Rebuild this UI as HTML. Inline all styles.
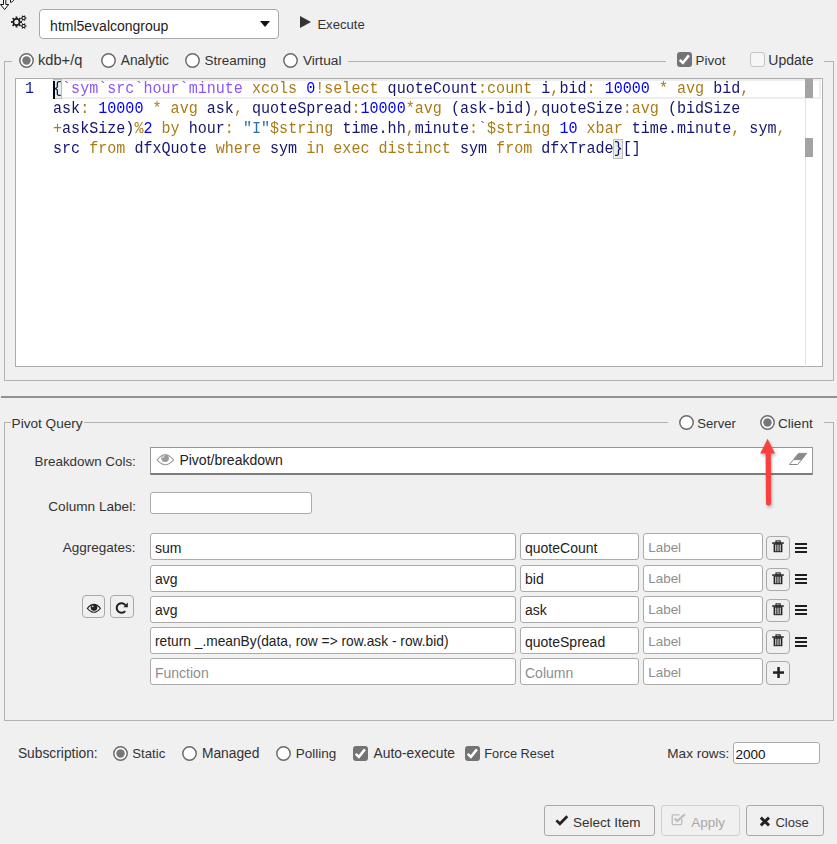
<!DOCTYPE html>
<html><head><meta charset="utf-8">
<style>
*{box-sizing:border-box;margin:0;padding:0}
html,body{width:837px;height:844px;overflow:hidden;background:#f0f0f0}
body{position:relative;font-family:"Liberation Sans",sans-serif;color:#333}
.a{position:absolute}
.t{position:absolute;white-space:nowrap;line-height:20px;font-size:13.5px;color:#333}
.fs{position:absolute;border:1px solid #b2b2b2}
.gap{position:absolute;background:#f0f0f0;height:3px}
.radio{position:absolute;width:15px;height:15px;border:1.7px solid #6c6c6c;border-radius:50%;background:#fff}
.radio.on::after{content:"";position:absolute;left:1.55px;top:1.55px;width:8.2px;height:8.2px;border-radius:50%;background:#777}
.cb{position:absolute;width:15px;height:15px;border-radius:3px}
.cb.on{background:#747474}
.cb.off{border:1px solid #c4c4c4;background:#f6f6f6}
.inp{position:absolute;background:#fff;border:1px solid #ababab;border-radius:3px}
.btn{position:absolute;border:1px solid #a9a9a9;border-radius:3px;background:#f0f0f0}
.code{position:absolute;left:53px;font-family:"Liberation Mono",monospace;font-size:16px;line-height:20px;white-space:pre;color:#16166e;transform-origin:0 0;transform:scaleX(0.9417)}
.k{color:#ab7b16}.n{color:#0000ff}.s{color:#8f55f5}.q{color:#2a6fa6}
.ph{color:#8e8e8e}
</style></head><body>

<!-- cursor icon -->
<svg class="a" style="left:0;top:0" width="16" height="12" viewBox="0 0 16 12">
<path d="M3.5 -1 V4.5 H0.5 L4.6 9.6 L8.7 4.5 H5.8 V-1 Z" fill="#fff" stroke="#111" stroke-width="1"/>
<path d="M10.5 -1 L10.5 2.3 Q11.5 2.8 13.5 0.5 L14 -1" fill="#fff" stroke="#111" stroke-width="1"/>
</svg>

<!-- gear icon -->
<svg class="a" style="left:10px;top:15px" width="18" height="15" viewBox="0 0 18 15">
<path fill="#1e1e1e" fill-rule="evenodd" d="M10.20 5.47 L10.41 6.17 L12.02 6.06 L12.02 7.94 L10.41 7.83 L10.20 8.53 L9.86 9.18 L11.07 10.24 L9.74 11.57 L8.68 10.36 L8.03 10.70 L7.33 10.91 L7.44 12.52 L5.56 12.52 L5.67 10.91 L4.97 10.70 L4.32 10.36 L3.26 11.57 L1.93 10.24 L3.14 9.18 L2.80 8.53 L2.59 7.83 L0.98 7.94 L0.98 6.06 L2.59 6.17 L2.80 5.47 L3.14 4.82 L1.93 3.76 L3.26 2.43 L4.32 3.64 L4.97 3.30 L5.67 3.09 L5.56 1.48 L7.44 1.48 L7.33 3.09 L8.03 3.30 L8.68 3.64 L9.74 2.43 L11.07 3.76 L9.86 4.82Z M8.7 7A2.2 2.2 0 1 0 4.3 7A2.2 2.2 0 1 0 8.7 7Z"/>
<path fill="#1e1e1e" fill-rule="evenodd" d="M15.42 2.05 L15.62 2.53 L16.43 2.47 L16.43 3.73 L15.62 3.67 L15.42 4.15 L15.10 4.57 L15.56 5.23 L14.47 5.87 L14.12 5.14 L13.60 5.20 L13.08 5.14 L12.73 5.87 L11.64 5.23 L12.10 4.57 L11.78 4.15 L11.58 3.67 L10.77 3.73 L10.77 2.47 L11.58 2.53 L11.78 2.05 L12.10 1.63 L11.64 0.97 L12.73 0.33 L13.08 1.06 L13.60 1.00 L14.12 1.06 L14.47 0.33 L15.56 0.97 L15.10 1.63Z M14.7 3.1A1.1 1.1 0 1 0 12.5 3.1A1.1 1.1 0 1 0 14.7 3.1Z"/>
<path fill="#1e1e1e" fill-rule="evenodd" d="M15.42 9.95 L15.62 10.43 L16.43 10.37 L16.43 11.63 L15.62 11.57 L15.42 12.05 L15.10 12.47 L15.56 13.13 L14.47 13.77 L14.12 13.04 L13.60 13.10 L13.08 13.04 L12.73 13.77 L11.64 13.13 L12.10 12.47 L11.78 12.05 L11.58 11.57 L10.77 11.63 L10.77 10.37 L11.58 10.43 L11.78 9.95 L12.10 9.53 L11.64 8.87 L12.73 8.23 L13.08 8.96 L13.60 8.90 L14.12 8.96 L14.47 8.23 L15.56 8.87 L15.10 9.53Z M14.7 11A1.1 1.1 0 1 0 12.5 11A1.1 1.1 0 1 0 14.7 11Z"/>
</svg>

<!-- dropdown -->
<div class="inp" style="left:39px;top:9px;width:240px;height:30px;border-radius:4px;border-color:#a9a9a9"></div>
<div class="t" style="left:50.1px;top:16.0px;font-size:14.0px;color:#222">html5evalcongroup</div>
<svg class="a" style="left:260px;top:21px" width="10" height="6"><path d="M0 0H10L5 6Z" fill="#111"/></svg>

<!-- execute -->
<svg class="a" style="left:300px;top:16px" width="12" height="12"><path d="M0 0L11 6L0 12Z" fill="#333"/></svg>
<div class="t" style="left:317.4px;top:15.0px;font-size:13.1px">Execute</div>

<!-- fieldset 1 -->
<div class="fs" style="left:4px;top:61px;width:830px;height:320px"></div>
<div class="gap" style="left:12px;top:60px;width:336px"></div>
<div class="gap" style="left:666px;top:60px;width:158px"></div>
<svg class="a" style="left:19px;top:53px" width="15" height="15" viewBox="0 0 15 15"><circle cx="7.5" cy="7.5" r="6.7" fill="#fff" stroke="#6a6a6a" stroke-width="1.45"/><circle cx="7.5" cy="7.5" r="4.2" fill="#777"/></svg><div class="t" style="left:37.9px;top:50.0px;font-size:14.7px">kdb+/q</div>
<svg class="a" style="left:100.5px;top:53px" width="15" height="15" viewBox="0 0 15 15"><circle cx="7.5" cy="7.5" r="6.7" fill="#fff" stroke="#6a6a6a" stroke-width="1.45"/></svg><div class="t" style="left:120.7px;top:51.0px;font-size:13.8px">Analytic</div>
<svg class="a" style="left:185px;top:53px" width="15" height="15" viewBox="0 0 15 15"><circle cx="7.5" cy="7.5" r="6.7" fill="#fff" stroke="#6a6a6a" stroke-width="1.45"/></svg><div class="t" style="left:204.4px;top:51.0px;font-size:13.5px">Streaming</div>
<svg class="a" style="left:282.5px;top:53px" width="15" height="15" viewBox="0 0 15 15"><circle cx="7.5" cy="7.5" r="6.7" fill="#fff" stroke="#6a6a6a" stroke-width="1.45"/></svg><div class="t" style="left:302.9px;top:51.0px;font-size:13.7px">Virtual</div>
<div class="cb on" style="left:677px;top:52px"><svg width="15" height="15"><path d="M2.7 7.8L5.9 10.9L11.9 3.4" fill="none" stroke="#fff" stroke-width="2.5"/></svg></div>
<div class="t" style="left:695.6px;top:51.0px;font-size:13.4px">Pivot</div>
<div class="cb off" style="left:750px;top:52px"></div>
<div class="t" style="left:768.3px;top:50.0px;font-size:14.0px">Update</div>

<!-- editor -->
<div class="a" style="left:15px;top:78px;width:808px;height:289px;background:#fff;border:1px solid #adadad"></div>
<div class="a" style="left:53px;top:79px;width:768px;height:20px;border:2px solid #eeeeee"></div>
<div class="a" style="left:805px;top:98px;width:1px;height:267px;background:#e2e2e2"></div>
<div class="a" style="left:805px;top:79px;width:8px;height:19px;background:#a3a3a3"></div>
<div class="a" style="left:805px;top:138px;width:8px;height:19px;background:#a3a3a3"></div>
<div class="a" style="left:53px;top:79px;width:9px;height:20px;background:#e6efe6;border:1px solid #bdbdbd"></div>
<div class="a" style="left:613px;top:139px;width:10px;height:20px;background:#e6efe6;border:1px solid #bdbdbd"></div>
<div class="a" style="left:53px;top:81px;width:2px;height:18px;background:#000"></div>
<div class="code" style="left:25px;top:79px;color:#0c1c8c">1</div>
<div class="code" style="top:79px">{<span class="s">`sym`src`hour`minute</span> <span class="k">xcols</span> <span class="n">0</span><span class="k">!select</span> quoteCount<span class="k">:count</span> i<span class="k">,</span>bid<span class="k">:</span> <span class="n">10000</span> <span class="k">*</span> <span class="k">avg</span> bid<span class="k">,</span></div>
<div class="code" style="top:99px">ask<span class="k">:</span> <span class="n">10000</span> <span class="k">*</span> <span class="k">avg</span> ask<span class="k">,</span> quoteSpread<span class="k">:</span><span class="n">10000</span><span class="k">*avg</span> (ask-bid)<span class="k">,</span>quoteSize<span class="k">:avg</span> (bidSize</div>
<div class="code" style="top:119px"><span class="k">+</span>askSize)<span class="k">%</span><span class="n">2</span> <span class="k">by</span> hour<span class="k">:</span> <span class="q">"I"</span><span class="k">$string</span> time.hh<span class="k">,</span>minute<span class="k">:</span><span class="s">`</span><span class="k">$string</span> <span class="n">10</span> <span class="k">xbar</span> time.minute<span class="k">,</span> sym<span class="k">,</span></div>
<div class="code" style="top:139px">src <span class="k">from</span> dfxQuote <span class="k">where</span> sym <span class="k">in</span> <span class="k">exec</span> <span class="k">distinct</span> sym <span class="k">from</span> dfxTrade}[]</div>

<!-- separator -->
<div class="a" style="left:1px;top:396px;width:836px;height:2px;background:#929292"></div>

<!-- fieldset 2 -->
<div class="fs" style="left:4px;top:422px;width:830px;height:299px"></div>
<div class="gap" style="left:11px;top:421px;width:73px"></div>
<div class="gap" style="left:668px;top:421px;width:156px"></div>
<div class="t" style="left:11.6px;top:414.0px;font-size:13.6px">Pivot Query</div>
<svg class="a" style="left:679px;top:415px" width="15" height="15" viewBox="0 0 15 15"><circle cx="7.5" cy="7.5" r="6.7" fill="#fff" stroke="#6a6a6a" stroke-width="1.45"/></svg><div class="t" style="left:697.3px;top:414.0px;font-size:13.1px">Server</div>
<svg class="a" style="left:760px;top:415px" width="15" height="15" viewBox="0 0 15 15"><circle cx="7.5" cy="7.5" r="6.7" fill="#fff" stroke="#6a6a6a" stroke-width="1.45"/><circle cx="7.5" cy="7.5" r="4.2" fill="#777"/></svg><div class="t" style="left:778.0px;top:414.0px;font-size:13.6px">Client</div>

<div class="t" style="left:34.6px;top:452.0px;font-size:13.4px">Breakdown Cols:</div>
<div class="a" style="left:150px;top:447px;width:663px;height:28px;background:#fff;border:1px solid #979797;border-bottom:2px solid #7c7c7c;border-radius:1px"></div>
<svg class="a" style="left:156px;top:453px" width="19" height="13" viewBox="0 0 19 13">
<path d="M1.1 6.9Q9.1 -3.3 17.6 6.9Q9.1 16.6 1.1 6.9Z" fill="none" stroke="#9a9a9a" stroke-width="1.05"/>
<circle cx="9.1" cy="5.3" r="3.8" fill="#9a9a9a"/><path d="M6.6 5.2Q6.8 3 8.8 2.5" fill="none" stroke="#e8e8e8" stroke-width="1.1"/>
</svg>
<div class="t" style="left:179.4px;top:450.0px;font-size:14.0px;color:#222">Pivot/breakdown</div>
<svg class="a" style="left:788px;top:452px" width="20" height="14" viewBox="0 0 20 14">
<path d="M10.6 1.3H18.8L13.9 7.5H5.4Z" fill="#8a8a8a" stroke="#8a8a8a" stroke-width="0.8" stroke-linejoin="round"/>
<path d="M5.5 7.6H13.8L9.7 12.5H1.4Z" fill="#fff" stroke="#8a8a8a" stroke-width="1" stroke-linejoin="round"/>
</svg>

<div class="t" style="left:48.3px;top:497.0px;font-size:13.6px">Column Label:</div>
<div class="inp" style="left:150px;top:492px;width:162px;height:22px"></div>

<div class="t" style="left:62.7px;top:538.0px;font-size:13.5px">Aggregates:</div>

<!--ROWS-->
<div class="inp" style="left:150px;top:533.3px;width:366px;height:27px"></div>
<div class="inp" style="left:520px;top:533.3px;width:118.5px;height:27px"></div>
<div class="inp" style="left:643px;top:533.3px;width:120px;height:27px"></div>
<div class="t" style="left:155px;top:537.95px;font-size:14px;color:#222">sum</div>
<div class="t" style="left:525px;top:537.95px;font-size:14px;color:#222">quoteCount</div>
<div class="t ph" style="left:648.3px;top:537.95px;font-size:13.4px">Label</div>
<div class="btn" style="left:766px;top:536.3px;width:24px;height:23.5px;border-radius:4px"><svg class="a" style="left:5.2px;top:3.2px" width="12" height="13" viewBox="0 0 12 13"><rect x="4" y="0.9" width="4.2" height="2" fill="none" stroke="#222" stroke-width="1.1"/><rect x="0.2" y="2.3" width="11.6" height="1.5" fill="#222"/><path d="M1.6 3.7H10.4V12.2H1.6Z" fill="#222"/><rect x="3" y="4.6" width="1.4" height="6.6" fill="#b8b8b8"/><rect x="5.3" y="4.6" width="1.4" height="6.6" fill="#b8b8b8"/><rect x="7.6" y="4.6" width="1.4" height="6.6" fill="#b8b8b8"/></svg></div>
<div class="a" style="left:795px;top:542.9px;width:12px;height:2px;background:#1e1e1e"></div>
<div class="a" style="left:795px;top:546.9px;width:12px;height:2px;background:#1e1e1e"></div>
<div class="a" style="left:795px;top:550.9px;width:12px;height:2px;background:#1e1e1e"></div>
<div class="inp" style="left:150px;top:564.5px;width:366px;height:27px"></div>
<div class="inp" style="left:520px;top:564.5px;width:118.5px;height:27px"></div>
<div class="inp" style="left:643px;top:564.5px;width:120px;height:27px"></div>
<div class="t" style="left:155px;top:569.15px;font-size:14px;color:#222">avg</div>
<div class="t" style="left:525px;top:569.15px;font-size:14px;color:#222">bid</div>
<div class="t ph" style="left:648.3px;top:569.15px;font-size:13.4px">Label</div>
<div class="btn" style="left:766px;top:567.5px;width:24px;height:23.5px;border-radius:4px"><svg class="a" style="left:5.2px;top:3.2px" width="12" height="13" viewBox="0 0 12 13"><rect x="4" y="0.9" width="4.2" height="2" fill="none" stroke="#222" stroke-width="1.1"/><rect x="0.2" y="2.3" width="11.6" height="1.5" fill="#222"/><path d="M1.6 3.7H10.4V12.2H1.6Z" fill="#222"/><rect x="3" y="4.6" width="1.4" height="6.6" fill="#b8b8b8"/><rect x="5.3" y="4.6" width="1.4" height="6.6" fill="#b8b8b8"/><rect x="7.6" y="4.6" width="1.4" height="6.6" fill="#b8b8b8"/></svg></div>
<div class="a" style="left:795px;top:574.1px;width:12px;height:2px;background:#1e1e1e"></div>
<div class="a" style="left:795px;top:578.1px;width:12px;height:2px;background:#1e1e1e"></div>
<div class="a" style="left:795px;top:582.1px;width:12px;height:2px;background:#1e1e1e"></div>
<div class="inp" style="left:150px;top:595.8px;width:366px;height:27px"></div>
<div class="inp" style="left:520px;top:595.8px;width:118.5px;height:27px"></div>
<div class="inp" style="left:643px;top:595.8px;width:120px;height:27px"></div>
<div class="t" style="left:155px;top:600.45px;font-size:14px;color:#222">avg</div>
<div class="t" style="left:525px;top:600.45px;font-size:14px;color:#222">ask</div>
<div class="t ph" style="left:648.3px;top:600.45px;font-size:13.4px">Label</div>
<div class="btn" style="left:766px;top:598.8px;width:24px;height:23.5px;border-radius:4px"><svg class="a" style="left:5.2px;top:3.2px" width="12" height="13" viewBox="0 0 12 13"><rect x="4" y="0.9" width="4.2" height="2" fill="none" stroke="#222" stroke-width="1.1"/><rect x="0.2" y="2.3" width="11.6" height="1.5" fill="#222"/><path d="M1.6 3.7H10.4V12.2H1.6Z" fill="#222"/><rect x="3" y="4.6" width="1.4" height="6.6" fill="#b8b8b8"/><rect x="5.3" y="4.6" width="1.4" height="6.6" fill="#b8b8b8"/><rect x="7.6" y="4.6" width="1.4" height="6.6" fill="#b8b8b8"/></svg></div>
<div class="a" style="left:795px;top:605.4px;width:12px;height:2px;background:#1e1e1e"></div>
<div class="a" style="left:795px;top:609.4px;width:12px;height:2px;background:#1e1e1e"></div>
<div class="a" style="left:795px;top:613.4px;width:12px;height:2px;background:#1e1e1e"></div>
<div class="inp" style="left:150px;top:627px;width:366px;height:27px"></div>
<div class="inp" style="left:520px;top:627px;width:118.5px;height:27px"></div>
<div class="inp" style="left:643px;top:627px;width:120px;height:27px"></div>
<div class="t" style="left:155px;top:631.65px;font-size:13.75px;color:#222">return _.meanBy(data, row =&gt; row.ask - row.bid)</div>
<div class="t" style="left:525px;top:631.65px;font-size:14px;color:#222">quoteSpread</div>
<div class="t ph" style="left:648.3px;top:631.65px;font-size:13.4px">Label</div>
<div class="btn" style="left:766px;top:630px;width:24px;height:23.5px;border-radius:4px"><svg class="a" style="left:5.2px;top:3.2px" width="12" height="13" viewBox="0 0 12 13"><rect x="4" y="0.9" width="4.2" height="2" fill="none" stroke="#222" stroke-width="1.1"/><rect x="0.2" y="2.3" width="11.6" height="1.5" fill="#222"/><path d="M1.6 3.7H10.4V12.2H1.6Z" fill="#222"/><rect x="3" y="4.6" width="1.4" height="6.6" fill="#b8b8b8"/><rect x="5.3" y="4.6" width="1.4" height="6.6" fill="#b8b8b8"/><rect x="7.6" y="4.6" width="1.4" height="6.6" fill="#b8b8b8"/></svg></div>
<div class="a" style="left:795px;top:636.6px;width:12px;height:2px;background:#1e1e1e"></div>
<div class="a" style="left:795px;top:640.6px;width:12px;height:2px;background:#1e1e1e"></div>
<div class="a" style="left:795px;top:644.6px;width:12px;height:2px;background:#1e1e1e"></div>
<div class="inp" style="left:150px;top:658.3px;width:366px;height:27px"></div>
<div class="inp" style="left:520px;top:658.3px;width:118.5px;height:27px"></div>
<div class="inp" style="left:643px;top:658.3px;width:120px;height:27px"></div>
<div class="t ph" style="left:155px;top:662.95px;font-size:14px">Function</div>
<div class="t ph" style="left:525px;top:662.95px;font-size:14px">Column</div>
<div class="t ph" style="left:648.3px;top:662.95px;font-size:13.4px">Label</div>
<div class="btn" style="left:766px;top:661.1px;width:24px;height:23.5px;border-radius:4px"><svg class="a" style="left:5.5px;top:4.8px" width="12" height="12"><rect x="0" y="4.3" width="11" height="2.5" fill="#222"/><rect x="4.3" y="0" width="2.5" height="11" fill="#222"/></svg></div>
<div class="btn" style="left:82px;top:595px;width:23px;height:23px;border-radius:4px"><svg class="a" style="left:3px;top:7px" width="16" height="11" viewBox="0 0 16 11"><path d="M1.4 5.3Q7.9 -2.6 14.4 5.3Q7.9 13.2 1.4 5.3Z" fill="none" stroke="#222" stroke-width="1.1"/><circle cx="8" cy="4.6" r="3.3" fill="#222"/><circle cx="6.7" cy="3.3" r="0.9" fill="#d8d8d8"/></svg></div>
<div class="btn" style="left:110px;top:595px;width:24px;height:23px;border-radius:4px"><svg class="a" style="left:3px;top:5px" width="15" height="14" viewBox="0 0 15 14"><path d="M11.43 4.25A4.8 4.8 0 1 0 11.18 10.09" fill="none" stroke="#222" stroke-width="2"/><path d="M13.8 1.6V6.2H9.4Z" fill="#222"/></svg></div>
<!--/ROWS-->
<div class="t" style="left:17.9px;top:744.0px;font-size:13.8px">Subscription:</div>
<svg class="a" style="left:113px;top:746px" width="15" height="15" viewBox="0 0 15 15"><circle cx="7.5" cy="7.5" r="6.7" fill="#fff" stroke="#6a6a6a" stroke-width="1.45"/><circle cx="7.5" cy="7.5" r="4.2" fill="#777"/></svg><div class="t" style="left:132.3px;top:744.0px;font-size:13.2px">Static</div>
<svg class="a" style="left:182px;top:746px" width="15" height="15" viewBox="0 0 15 15"><circle cx="7.5" cy="7.5" r="6.7" fill="#fff" stroke="#6a6a6a" stroke-width="1.45"/></svg><div class="t" style="left:201.9px;top:744.0px;font-size:13.8px">Managed</div>
<svg class="a" style="left:276px;top:746px" width="15" height="15" viewBox="0 0 15 15"><circle cx="7.5" cy="7.5" r="6.7" fill="#fff" stroke="#6a6a6a" stroke-width="1.45"/></svg><div class="t" style="left:295.7px;top:744.0px;font-size:13.5px">Polling</div>
<div class="cb on" style="left:353px;top:746px"><svg width="15" height="15"><path d="M2.7 7.8L5.9 10.9L11.9 3.4" fill="none" stroke="#fff" stroke-width="2.5"/></svg></div>
<div class="t" style="left:373.6px;top:744.0px;font-size:13.8px">Auto-execute</div>
<div class="cb on" style="left:465px;top:746px"><svg width="15" height="15"><path d="M2.7 7.8L5.9 10.9L11.9 3.4" fill="none" stroke="#fff" stroke-width="2.5"/></svg></div>
<div class="t" style="left:484.3px;top:744.0px;font-size:12.8px">Force Reset</div>
<div class="t" style="left:667.3px;top:744.0px;font-size:13.6px">Max rows:</div>
<div class="inp" style="left:733px;top:742px;width:87px;height:22px"></div>
<div class="t" style="left:735.6px;top:745.0px;font-size:13.5px;color:#111">2000</div>

<div class="btn" style="left:544px;top:805px;width:111px;height:31px"></div>
<svg class="a" style="left:555px;top:815px" width="14" height="11" viewBox="0 0 14 11"><path d="M1.4 5.4L4.9 8.8L12.3 1.3" fill="none" stroke="#222" stroke-width="2.7"/></svg>
<div class="t" style="left:572.9px;top:813.0px;font-size:13.5px">Select Item</div>
<div class="btn" style="left:661px;top:805px;width:79px;height:31px;border-color:#d0d0d0"></div>
<svg class="a" style="left:671px;top:813px" width="16" height="13" viewBox="0 0 16 13"><path d="M10.8 6V10.3Q10.8 11.6 9.5 11.6H2.4Q1.2 11.6 1.2 10.3V3.2Q1.2 1.9 2.4 1.9H8.5" fill="none" stroke="#bdbdbd" stroke-width="1.3"/><path d="M3.8 5.6L6.3 8.1L13.8 1.2" fill="none" stroke="#bdbdbd" stroke-width="2.2"/></svg>
<div class="t" style="left:691.3px;top:813.0px;font-size:13.5px;color:#a8a8a8">Apply</div>
<div class="btn" style="left:746px;top:805px;width:78px;height:31px"></div>
<svg class="a" style="left:758.5px;top:815.5px" width="12" height="11" viewBox="0 0 12 11"><path d="M1.8 1.6L10 9.4M10 1.6L1.8 9.4" fill="none" stroke="#222" stroke-width="2.9"/></svg>
<div class="t" style="left:775.4px;top:813.0px;font-size:13.0px">Close</div>

<!-- red arrow -->
<svg class="a" style="left:752px;top:434px" width="32" height="80" viewBox="0 0 32 80">
<defs><filter id="sh" x="-50%" y="-20%" width="200%" height="140%"><feGaussianBlur stdDeviation="1.5"/></filter></defs>
<g transform="translate(1,2)" opacity="0.45" filter="url(#sh)"><path d="M15.6 4.7L23 19.6H18.9L19 69.5Q19 71.5 16.5 71.5Q14 71.5 14 69.5L13.6 19.6H8.2Z" fill="#555"/></g>
<path d="M15.6 4.7L23 19.6H18.9L19 69.5Q19 71.5 16.5 71.5Q14 71.5 14 69.5L13.6 19.6H8.2Z" fill="#f9403f"/>
</svg>

</body></html>
